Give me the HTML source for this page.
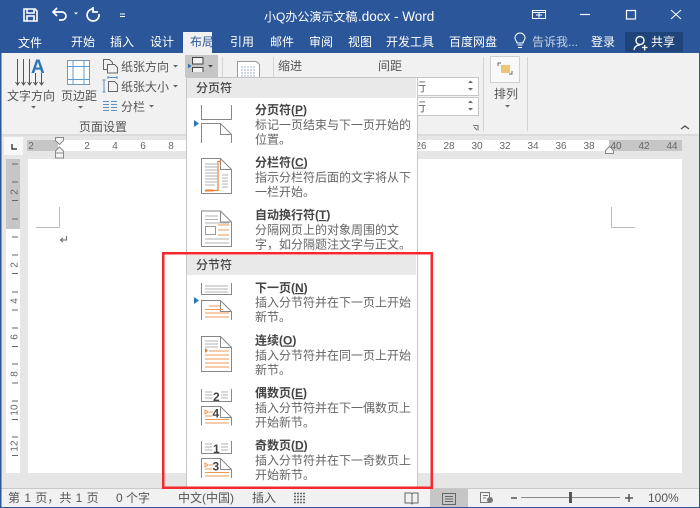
<!DOCTYPE html>
<html><head><meta charset="utf-8"><style>
html,body{margin:0;padding:0;background:#e6e6e6;overflow:hidden}
svg{display:block;position:absolute;left:0;top:0;filter:blur(.35px)}
text{font-family:"Liberation Sans","Noto Sans CJK SC",sans-serif;font-size:12px;fill:#555}
.w text,text.w{fill:#fff}
.n text{font-size:10px;fill:#666;text-anchor:middle}
.t{font-weight:700;fill:#444}
.d{fill:#666}
.o{stroke:#ed9a55;fill:none}
.g{stroke:#b0b0b0;fill:none}
.p{stroke:#888;fill:none}
</style></head><body>
<svg width="700" height="508" viewBox="0 0 700 508" xmlns="http://www.w3.org/2000/svg">
<rect width="700" height="508" fill="#e6e6e6"/>
<!-- title -->
<rect width="700" height="53" fill="#2b579a"/>
<rect y="53" width="700" height="81" fill="#f1f1f1"/>
<rect y="134" width="700" height="2" fill="#dcdcdc"/>
<rect x="183" y="32" width="29" height="21" fill="#f1f1f1"/>
<g class="w">
<text x="264" y="21">小Q办公演示文稿</text>
<text x="358" y="21" style="font-size:13.5px">.docx - Word</text>
<text x="18" y="47">文件</text><text x="71" y="46">开始</text><text x="110" y="46">插入</text><text x="150" y="46">设计</text>
<text x="230" y="46">引用</text><text x="270" y="46">邮件</text><text x="309" y="46">审阅</text><text x="348" y="46">视图</text>
<text x="386" y="46">开发工具</text><text x="449" y="46">百度网盘</text><text x="591" y="46">登录</text>
</g>
<text x="190" y="46" style="fill:#2b579a">布局</text>
<text x="532" y="46" style="fill:#c3d0e3">告诉我...</text>
<rect x="625" y="32" width="58" height="20" fill="#1f4479"/>
<text x="651" y="46" style="fill:#fff">共享</text>
<g fill="none" stroke="#fff" stroke-width="1.4">
<!-- save -->
<path d="M24 9h11l2 2v10H24zM27 9v4h7V9M27 21v-5h7v5" stroke-width="1.6"/>
<!-- undo -->
<path d="M54 12h8a4 4 0 0 1 0 8h-3M57 8l-4 4 4 4" stroke-width="1.7"/>
<!-- redo -->
<path d="M93 9a6 6 0 1 0 6 5M93 7v5h5" stroke-width="1.7" />
<path d="M120 14h5M120 16.500h5" stroke-width="1"/>
<!-- window -->
<path d="M532.500 10.500h13v8h-13zM532.500 12.500h13M539 12.500v6M536 15h6" stroke-width="1"/>
<path d="M580 14.500h10" stroke-width="1.2"/>
<rect x="626.500" y="10.500" width="9" height="8.500" stroke-width="1.2"/>
<path d="M671 10l10 9M681 10l-10 9" stroke-width="1"/>
<!-- bulb -->
<path transform="translate(0 3)" d="M518 44.500h4M517.500 42h5M517 40c0-2-2-2.500-2-5a5 5 0 0 1 10 0c0 2.500-2 3-2 5z" stroke-width="1"/>
<!-- user -->
<circle cx="640" cy="40.500" r="4"/>
<path d="M634 50c.5-3 2.500-5 6-5M642 47.500h5.500M644.700 45v5.500" stroke-width="1.3"/>
</g>
<path d="M74 12.500h4l-2 2z" fill="#fff"/>
<!-- ribbon: text direction -->
<g stroke="#555" fill="none">
<path d="M17.500 59v25M23.500 59v25M29.500 59v25M35.500 73v11M41.500 73v11"/>
<path d="M15.500 82l2 3 2-3M21.500 82l2 3 2-3M27.500 82l2 3 2-3M33.500 82l2 3 2-3M39.500 82l2 3 2-3" />
</g>
<text x="31" y="73" style="font-size:19px;font-weight:700;fill:#2f75b5">A</text>
<text x="7" y="100">文字方向</text>
<text x="61" y="100">页边距</text>
<path d="M31 106h5l-2.500 2.500zM78 106h5l-2.500 2.500zM173 65h5l-2.500 2.500zM173 85h5l-2.500 2.500zM149 105h5l-2.500 2.500z" fill="#666"/>
<!-- margins icon -->
<g fill="none"><rect x="67.500" y="60.500" width="22" height="24" fill="#fff" stroke="#7a98b8"/><path d="M73 60v25M84 60v25M67 66.500h23M67 79.500h23" stroke="#5b9bd5"/></g>
<!-- orientation -->
<g fill="none" stroke="#666"><path d="M103.500 59.500h6l3 3v7h-9z"/><path d="M107.500 64.500h7l3 3v5.500h-10z" fill="#f1f1f1"/></g>
<g fill="none" stroke="#5b8fc7"><path d="M104 80v12M102.500 80h3M102.500 92h3M108 77.500h9M108 76v3M117 76v3"/></g>
<path d="M108.500 81.500h6l3 3v7h-9z" fill="none" stroke="#666"/>
<path d="M103 101.500h6M103 104.500h6M103 107.500h6M103 110.500h6M111 101.500h6M111 104.500h6M111 107.500h6M111 110.500h6" stroke="#5b8fc7" fill="none"/>
<text x="121" y="71">纸张方向</text><text x="121" y="91">纸张大小</text><text x="121" y="111">分栏</text>
<text x="79" y="131">页面设置</text>
<path d="M222.500 57v73M273.500 57v73M483.500 57v74M527.500 57v74" stroke="#d4d4d4" fill="none"/>
<!-- break button -->
<rect x="185" y="55" width="33" height="22" fill="#c6c6c6"/>
<path d="M192.500 57.500h10.500v6.500h-10.500zM192.500 72v-4.500h10.500V72" fill="#f1f1f1" stroke="#444"/>
<path d="M188 63.500l3.500 2.500-3.500 2.500z" fill="#2f75b5"/>
<path d="M208 65h5l-2.500 2.500z" fill="#444"/>
<!-- line number icon -->
<path d="M237.500 80V61.500h19l3 3V80z" fill="#fff" stroke="#999"/>
<path d="M241 67h15M241 70h15M241 73h15M241 76h15" stroke="#9db4cf" stroke-dasharray="2 1"/>
<text x="278" y="70">缩进</text><text x="378" y="70">间距</text>
<!-- inputs -->
<rect x="400.500" y="77.500" width="78" height="18" fill="#fff" stroke="#c6c6c6"/>
<rect x="400.500" y="97.500" width="78" height="18" fill="#fff" stroke="#c6c6c6"/>
<text x="414" y="91" style="fill:#666">行</text><text x="414" y="111" style="fill:#666">行</text>
<path d="M468 83h5l-2.500-2.500zM468 88h5l-2.500 2.500zM468 103h5l-2.500-2.500zM468 108h5l-2.500 2.500z" fill="#666"/>
<path d="M473 125.500h5v5M477 130l-3-3" fill="none" stroke="#777"/>
<!-- arrange -->
<rect x="490.500" y="56.500" width="29" height="26" fill="#f9f9f9" stroke="#d0d0d0"/>
<rect x="501" y="65" width="9" height="8" fill="#eec477"/>
<path d="M498 66v-3h3M512 71v3h-3" stroke="#666" fill="none"/>
<text x="494" y="98">排列</text>
<path d="M505 105h5l-2.500 2.500z" fill="#666"/>
<path d="M681 129l4-3 4 3" fill="none" stroke="#555" stroke-width="1.400"/>
<!-- rulers -->
<rect x="4" y="137" width="19" height="18" fill="#f8f8f8"/>
<path d="M12 144v5h5" fill="none" stroke="#444" stroke-width="1.500"/>
<rect x="27" y="140" width="582" height="11" fill="#fff"/>
<rect x="27" y="140" width="31" height="11" fill="#c6c6c6"/>
<rect x="609" y="140" width="73" height="11" fill="#c6c6c6"/>
<g class="n">
<text x="31" y="149">2</text><text x="87" y="149">2</text><text x="115" y="149">4</text><text x="143" y="149">6</text><text x="171" y="149">8</text>
<text x="421" y="149">26</text><text x="449" y="149">28</text><text x="477" y="149">30</text><text x="505" y="149">32</text><text x="533" y="149">34</text><text x="561" y="149">36</text><text x="589" y="149">38</text><text x="616" y="149">40</text><text x="644" y="149">42</text><text x="672" y="149">44</text>
</g>
<path d="M55.500 137.500h8v3l-4 4-4-4zM55.500 158v-7l4-4 4 4v7zM55.500 153h8" fill="#f4f4f4" stroke="#888"/>
<path d="M605.500 153.500v-3l4-4 4 4v3z" fill="#f4f4f4" stroke="#888"/>
<!-- doc -->
<rect x="28" y="159" width="654" height="314" fill="#fff"/>
<rect x="6" y="159" width="14" height="314" fill="#fff"/>
<rect x="6" y="159" width="14" height="70" fill="#c6c6c6"/>
<path d="M12 164h6M12 182h6M12 200.500h6M12 219h6M12 237h6M12 255h6M12 273.500h6M12 292h6M12 310h6M12 328h6M12 346.500h6M12 364h6M12 383h6M12 401h6M12 419.500h6M12 437h6M12 455.500h6" stroke="#666" fill="none"/>
<g class="n">
<text transform="translate(17.500 192) rotate(-90)">2</text>
<text transform="translate(17.500 265) rotate(-90)">2</text>
<text transform="translate(17.500 301) rotate(-90)">4</text>
<text transform="translate(17.500 337) rotate(-90)">6</text>
<text transform="translate(17.500 374) rotate(-90)">8</text>
<text transform="translate(17.500 410) rotate(-90)">10</text>
<text transform="translate(17.500 446) rotate(-90)">12</text>
</g>
<path d="M59.500 207v20.500H36M611.500 207v20.500H635" fill="none" stroke="#bcbcbc"/>
<path d="M66.500 236v4h-6M63 238l-2.500 2 2.500 2" fill="none" stroke="#666"/>
<!-- status -->
<rect y="488" width="700" height="1" fill="#c9c9c9"/>
<rect y="489" width="700" height="18" fill="#f1f1f1"/>
<rect y="507" width="700" height="1" fill="#2b579a"/>
<rect x="0" y="0" width="1.500" height="508" fill="#2b579a"/>
<rect x="699" y="0" width="1" height="508" fill="#2b579a"/>
<g>
<text x="8" y="502" style="word-spacing:1px">第 1 页，共 1 页</text><text x="116" y="502">0 个字</text><text x="178" y="502">中文(中国)</text><text x="252" y="502">插入</text>
<text x="648" y="502">100%</text>
</g>
<path d="M294 493.500h11M294 496.500h11M294 499.500h11M294 502.500h11" stroke="#666" stroke-width="1.500" stroke-dasharray="2 1" fill="none"/>
<path d="M405 493h6l1 1 1-1h5v10h-5l-1 1-1-1h-6zM412 494v9" fill="none" stroke="#666"/>
<rect x="430" y="489" width="38" height="18" fill="#c6c6c6"/>
<path d="M442.500 493.500h13v11h-13zM445 496.500h8M445 499h8M445 501.500h8" fill="none" stroke="#666"/>
<path d="M480.500 492.500h9v10h-9zM483 495.500h5M483 498h3" fill="none" stroke="#777"/>
<circle cx="490" cy="500" r="3" fill="#777"/>
<path d="M511 498h6M521 497.500h99" stroke="#888" fill="none"/>
<path d="M511 498h6" stroke="#555" stroke-width="1.500"/>
<rect x="569" y="492" width="3" height="11" fill="#555"/>
<path d="M625 498h8M629 494v8" stroke="#555" stroke-width="1.500"/>
<!-- menu -->
<rect x="186.500" y="77.500" width="231" height="411" fill="#fff" stroke="#c6c6c6"/>
<rect x="187" y="78" width="229" height="20" fill="#e9e9e9"/>
<rect x="187" y="255" width="229" height="20" fill="#e9e9e9"/>
<text x="196" y="92" style="fill:#444;font-weight:500">分页符</text>
<text x="196" y="269" style="fill:#444;font-weight:500">分节符</text>
<g>
<text x="255" y="114" class="t">分页符(<tspan text-decoration="underline">P</tspan>)</text>
<text x="255" y="129" class="d">标记一页结束与下一页开始的</text>
<text x="255" y="143.500" class="d">位置。</text>
<text x="255" y="166.500" class="t">分栏符(<tspan text-decoration="underline">C</tspan>)</text>
<text x="255" y="181.500" class="d">指示分栏符后面的文字将从下</text>
<text x="255" y="196" class="d">一栏开始。</text>
<text x="255" y="219" class="t">自动换行符(<tspan text-decoration="underline">T</tspan>)</text>
<text x="255" y="234" class="d">分隔网页上的对象周围的文</text>
<text x="255" y="248.500" class="d">字，如分隔题注文字与正文。</text>
<text x="255" y="292" class="t">下一页(<tspan text-decoration="underline">N</tspan>)</text>
<text x="255" y="306.500" class="d">插入分节符并在下一页上开始</text>
<text x="255" y="321" class="d">新节。</text>
<text x="255" y="344.500" class="t">连续(<tspan text-decoration="underline">O</tspan>)</text>
<text x="255" y="359.500" class="d">插入分节符并在同一页上开始</text>
<text x="255" y="374" class="d">新节。</text>
<text x="255" y="397" class="t">偶数页(<tspan text-decoration="underline">E</tspan>)</text>
<text x="255" y="412" class="d">插入分节符并在下一偶数页上</text>
<text x="255" y="426.500" class="d">开始新节。</text>
<text x="255" y="449.500" class="t">奇数页(<tspan text-decoration="underline">D</tspan>)</text>
<text x="255" y="464.500" class="d">插入分节符并在下一奇数页上</text>
<text x="255" y="479" class="d">开始新节。</text>
</g>
<!-- menu icons -->
<path d="M201.500 105v14.500h30V105M201.500 143v-19.500h19l11 11V143M220.500 123.500v11h11" class="p"/>
<path d="M194 120l5 3.500-5 3.500z" fill="#2f75b5"/>
<!-- column -->
<path d="M201.500 158.500h19l11 11v24h-30zM220.500 158.500v11h11" class="p" fill="#fff"/>
<path d="M205 164h12M205 167h12M205 170h12M205 173h12M205 176h12M205 179h12M205 182h12M205 185h10M222 175h6M222 178h6M222 181h6M222 184h6M222 187h6" class="g"/>
<path d="M205 190.500h8" stroke="#ed7d31" stroke-width="2" fill="none"/>
<path d="M213 190.500h5v-29h3" class="o" stroke-width="1.200" style="stroke:#ed7d31"/>
<!-- wrap -->
<path d="M201.500 211h19l11 11v24.500h-30zM220.500 211v11h11" class="p"/>
<path d="M205 216h13M205 219.500h13M205 223h24M205 239h24M205 243h24" class="g"/>
<rect x="205.500" y="226.500" width="10" height="8" fill="none" stroke="#999"/>
<path d="M218 225h11M218 230h11M218 235h11" class="o"/>
<!-- next page -->
<path d="M201.500 283v11.500h30V283M201.500 320v-19.500h19l11 11V320M220.500 300.500v11h11" class="p"/>
<path d="M205 286h23M205 289h23M205 292h23" class="g"/>
<path d="M209 306h11M205 309.500h18M205 313h24M205 317h24" class="o"/>
<path d="M194 297l5 3.500-5 3.500z" fill="#2f75b5"/>
<!-- continuous -->
<path d="M201.500 336.500h19l11 11v24h-30zM220.500 336.500v11h11" class="p"/>
<path d="M205 341h13M205 344h13M205 347h13" class="g"/>
<path d="M209 351h20M205 355h24M205 359h24M205 363h24M205 367h24" class="o"/>
<path d="M205 348l3 2.500-3 2.500z" fill="#ed7d31"/>
<!-- even -->
<path d="M201.500 389v12.500h30V389M201.500 425.500v-19h19l11 11v8M220.500 406.500v11h11" class="p"/>
<path d="M205 392h7M205 395h7M205 398h7M221 392h7M221 395h7M221 398h7" class="g"/>
<text x="213" y="401" style="font-size:12px;font-weight:700;fill:#444">2</text>
<path d="M205 410l3 2-3 2zM209 412h4M205 416h7M205 419.500h24M205 423h24" class="o"/>
<text x="212.500" y="417.500" style="font-size:12px;font-weight:700;fill:#444">4</text>
<!-- odd -->
<path d="M201.500 441v12.500h30V441M201.500 478v-19.500h19l11 11v8.500M220.500 458.500v11h11" class="p"/>
<path d="M205 444h7M205 447h7M205 450h7M221 444h7M221 447h7M221 450h7" class="g"/>
<text x="213" y="453" style="font-size:12px;font-weight:700;fill:#444">1</text>
<path d="M205 463l3 2-3 2zM209 465h4M205 469h7M205 472.500h24M205 476h24" class="o"/>
<text x="212.500" y="470.500" style="font-size:12px;font-weight:700;fill:#444">3</text>
<!-- red frame -->
<rect x="163.250" y="253.250" width="268.500" height="234.500" fill="none" stroke="#f5282d" stroke-width="2.500"/>
</svg>
</body></html>
